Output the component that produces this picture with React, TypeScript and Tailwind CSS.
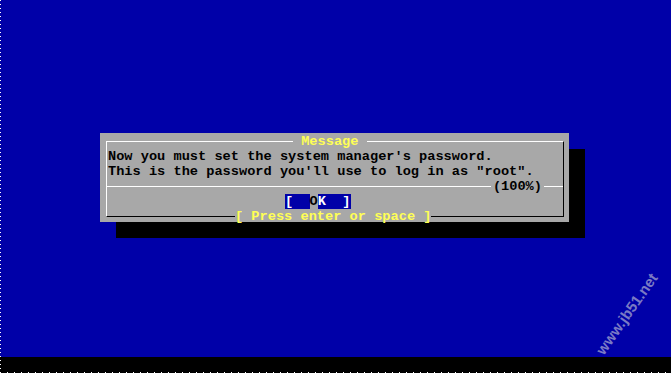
const mono = "font-['Liberation_Mono','DejaVu_Sans_Mono',monospace] text-[13.65px] font-bold leading-[15px]";

function Row({ children, className = "" }: { children: React.ReactNode; className?: string }) {
  return <div className={`flex h-[15px] shrink-0 items-center whitespace-pre ${className}`}>{children}</div>;
}

export default function App() {
  return (
    <div className="relative flex h-[373px] w-[671px] flex-col overflow-hidden bg-black">
      {/* console screen */}
      <div className="h-[357px] bg-[#0000a8] pl-[100px] pt-[133px]">
        <div className={`h-[89px] w-[469px] bg-[#a8a8a8] pt-[8px] pl-[6px] pr-[5px] shadow-[16px_16px_0_#000] ${mono}`}>
          <div className="flex h-[76px] flex-col border border-t-white border-l-white border-r-black border-b-black">
            {/* title */}
            <Row className="-mt-[8px] pl-[186px]">
              <span className="inline-block h-[12px] bg-[#a8a8a8] leading-[12px] text-[#ffff55]"> Message </span>
            </Row>

            <Row className="pl-px text-black">Now you must set the system manager's password.</Row>
            <Row className="pl-px text-black">This is the password you'll use to log in as "root".</Row>

            {/* divider with progress */}
            <Row className="text-black">
              <div className="h-px flex-1 bg-white" />
              <span className="px-[2px]">(100%)</span>
              <div className="h-px w-[19px] bg-white" />
            </Row>

            {/* OK button */}
            <Row className="pl-[178px]">
              <span className="bg-[#0000a8] text-white">[  </span>
              <span className="text-black">O</span>
              <span className="bg-[#0000a8] text-white">K  ]</span>
            </Row>

            {/* footer */}
            <Row className="pl-[128px]">
              <span className="inline-block h-[11px] bg-[#a8a8a8] leading-[11px] text-[#ffff55]">[ Press enter or space ]</span>
            </Row>
          </div>
        </div>
      </div>
      <div className="h-[16px] bg-black" />

      {/* screenshot edge dots */}
      <div className="absolute left-0 top-0 h-full w-px bg-[repeating-linear-gradient(to_bottom,#ffffff_0_1px,transparent_1px_4px)]" />
      <div className="absolute bottom-0 left-0 h-px w-full bg-[repeating-linear-gradient(to_right,#ffffff_0_1px,transparent_1px_7px)]" />

      {/* watermark */}
      <div className="absolute left-[572px] top-[306px] w-[110px] -rotate-[55deg] text-center font-['Liberation_Sans',Arial,sans-serif] text-[15px] font-bold leading-[16px] text-[#7a7ac4]">
        www.jb51.net
      </div>
    </div>
  );
}
